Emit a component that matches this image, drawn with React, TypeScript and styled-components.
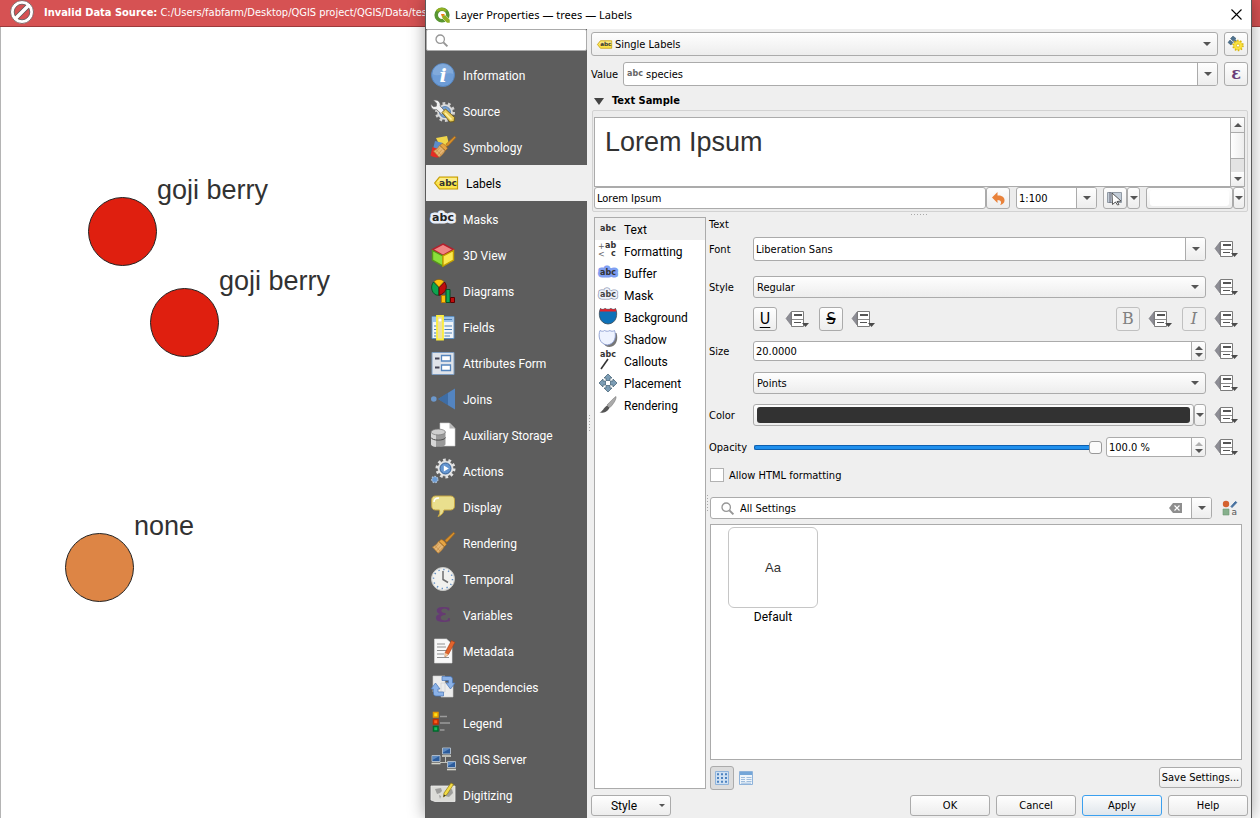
import React from "react";
import styled, { createGlobalStyle, css } from "styled-components";

const uiFont = `Roboto, "Open Sans", sans-serif`;
const titleFont = `"Noto Sans", "Open Sans", sans-serif`;
const formFont = `"DejaVu Sans Condensed", "DejaVu Sans", sans-serif`;
const mapFont = `"Liberation Sans", Arial, sans-serif`;
const line = "#ababab";
const face = "linear-gradient(#fefefe, #ededed)";

const GlobalStyle = createGlobalStyle`
  *, *::before, *::after { box-sizing: border-box; }
  body { margin: 0; background: #fff; color: #000; font: 11px/16px ${formFont}; }
  button, input, select { margin: 0; color: inherit; font: inherit; }
  svg { display: block; flex: none; overflow: visible; }
`;

/* ---------- desktop and map ---------- */

const Desktop = styled.div`
  display: grid;
  grid-template-columns: minmax(0, 1fr);
  min-height: 100vh;
  overflow: hidden;
  > * { grid-area: 1 / 1; }
`;

const MainWindow = styled.main`
  display: flex;
  flex-direction: column;
`;

const MessageBar = styled.div`
  display: flex;
  align-items: center;
  gap: 10px;
  height: 27px;
  padding: 0 10px 2px;
  overflow: hidden;
  white-space: nowrap;
  color: #fff;
  background: #d65253;
  border-bottom: 1px solid #9c3a3b;
`;

const Caption = styled.span`
  padding-top: 2px;
`;

const MapCanvas = styled.div`
  position: relative;
  flex: 1;
  background: #fff;
  border-left: 1px solid #b4b4b4;
`;

const Tree = styled.div<{ $x: number; $y: number; $fill: string }>`
  position: absolute;
  left: ${(p) => p.$x}px;
  top: ${(p) => p.$y}px;
  width: 69px;
  height: 69px;
  border: 1px solid #232323;
  border-radius: 50%;
  background: ${(p) => p.$fill};
`;

const TreeLabel = styled.span`
  position: absolute;
  left: 68px;
  bottom: 59px;
  font: 27px/32px ${mapFont};
  color: #323232;
  white-space: nowrap;
`;

/* ---------- dialog frame ---------- */

const Dialog = styled.section`
  position: relative;
  display: flex;
  flex-direction: column;
  margin: 0 8px 0 425px;
  background: #efefef;
  border: solid #5a5a5a;
  border-width: 0 1px;
  box-shadow: 0 0 16px rgba(0, 0, 0, 0.36);
`;

const TitleBar = styled.header`
  display: flex;
  align-items: center;
  gap: 5px;
  height: 29px;
  padding: 0 8px;
  background: #fff;
`;

const Title = styled.h1`
  flex: 1;
  margin: 0;
  font: 400 11px/16px ${titleFont};
`;

const PlainButton = styled.button`
  display: grid;
  place-items: center;
  padding: 0;
  border: 0;
  background: none;
`;

const DialogBody = styled.div`
  display: flex;
  flex: 1;
`;

const Sidebar = styled.nav`
  width: 161px;
  background: #5d5d5d;
  padding-bottom: 5px;
`;

const SearchBox = styled.label`
  display: flex;
  align-items: center;
  gap: 4px;
  height: 22px;
  margin: 0 0 6px;
  padding: 0 8px;
  background: #fff;
  border: 1px solid ${line};
  border-radius: 2px;
`;

const BareInput = styled.input`
  flex: 1;
  min-width: 0;
  padding: 2px 0 0;
  border: 0;
  outline: 0;
  background: none;
`;

const SideItem = styled.button<{ $active?: boolean }>`
  display: flex;
  align-items: center;
  gap: 8px;
  width: 100%;
  height: 36px;
  padding: 0 0 0 5px;
  border: 0;
  background: none;
  font: 12px/16px ${uiFont};
  color: #fff;
  ${(p) => p.$active && css`
    padding-left: 8px;
    color: #000;
    background: #efefef;
  `}
`;

const Splitter = styled.div<{ $horizontal?: boolean; $size?: number }>`
  display: grid;
  place-items: center;
  flex: 0 0 ${(p) => p.$size ?? 4}px;
  &::after {
    content: "";
    width: ${(p) => (p.$horizontal ? 17 : 1)}px;
    height: ${(p) => (p.$horizontal ? 1 : 17)}px;
    background: repeating-linear-gradient(${(p) => (p.$horizontal ? "90deg" : "180deg")}, #a8a8a8 0 1px, transparent 1px 3px);
  }
`;

const Content = styled.div`
  display: flex;
  flex: 1;
  flex-direction: column;
  min-width: 0;
  padding: 3px 3px 0 0;
`;

/* ---------- shared controls ---------- */

const frame = css`
  border: 1px solid ${line};
  border-radius: 3px;
`;

const ToolRow = styled.div`
  display: flex;
  align-items: center;
  gap: 6px;
  height: 24px;
  margin-bottom: 6px;
`;

const InlineLabel = styled.label`
  width: 26px;
  padding-top: 2px;
`;

const SelectFrame = styled.div<{ $h?: number }>`
  position: relative;
  display: flex;
  align-items: center;
  flex: 1;
  min-width: 0;
  height: ${(p) => p.$h ?? 22}px;
`;

const Select = styled.select<{ $indent?: boolean }>`
  appearance: none;
  width: 100%;
  height: 100%;
  padding: 2px 24px 0 ${(p) => (p.$indent ? 23 : 3)}px;
  ${frame}
  background: ${face};
`;

const Overlay = styled.span<{ $side: "left" | "right" }>`
  position: absolute;
  top: 0;
  bottom: 0;
  ${(p) => (p.$side === "left" ? "left: 6px;" : "right: 7px;")}
  display: grid;
  place-items: center;
  pointer-events: none;
`;

const Field = styled.div<{ $h?: number; $w?: number }>`
  display: flex;
  align-items: center;
  flex: ${(p) => (p.$w ? `0 0 ${p.$w}px` : "1 1 0")};
  min-width: 0;
  height: ${(p) => p.$h ?? 22}px;
  padding-left: 2px;
  overflow: hidden;
  ${frame}
  background: #fff;
`;

const FieldButton = styled.button<{ $w?: number }>`
  display: grid;
  place-items: center;
  align-content: center;
  gap: 3px;
  flex: none;
  width: ${(p) => p.$w ?? 20}px;
  height: 100%;
  padding: 0;
  border: 0;
  border-left: 1px solid ${line};
  background: ${face};
`;

const Button = styled.button<{ $w?: number; $h?: number; $primary?: boolean; $pressed?: boolean }>`
  display: flex;
  align-items: center;
  justify-content: center;
  flex: none;
  width: ${(p) => p.$w ?? 24}px;
  height: ${(p) => p.$h ?? 24}px;
  padding: 0;
  ${frame}
  background: ${(p) => (p.$pressed ? "#dcdcdc" : face)};
  ${(p) => p.$primary && css`
    border-color: #3ba0ef;
    background: linear-gradient(#fdfdfd, #dfe6ec);
  `}
`;

const Glyph = styled(Button)<{ $kind: "underline" | "strike" | "bold" | "italic" }>`
  font: 16px/20px ${formFont};
  ${(p) => p.$kind === "underline" && "text-decoration: underline; text-underline-offset: 3px; text-decoration-thickness: 1px;"}
  ${(p) => p.$kind === "strike" && "text-decoration: line-through; text-decoration-thickness: 2px;"}
  ${(p) => p.$kind === "bold" && `font-family: "DejaVu Serif", serif; color: #808080; border-color: #c0c0c0; background: #f0f0f0;`}
  ${(p) => p.$kind === "italic" && `font-family: "DejaVu Serif", serif; font-style: italic; color: #808080; border-color: #c0c0c0; background: #f0f0f0;`}
`;

/* ---------- text sample ---------- */

const GroupTitle = styled.h2`
  display: flex;
  align-items: center;
  gap: 8px;
  height: 18px;
  margin: 0 0 0 3px;
  font: 700 11px/16px ${formFont};
`;

const SampleGroup = styled.div`
  margin-left: 1px;
  padding: 6px 2px 2px 1px;
  border: 1px solid #d2d2d2;
  border-radius: 2px;
  background: #ececec;
`;

const Preview = styled.div`
  display: flex;
  height: 70px;
  background: #fff;
  border: 1px solid ${line};
`;

const PreviewText = styled.div`
  flex: 1;
  padding: 8px 10px;
  font: 27px/32px ${mapFont};
  color: #323232;
`;

const ScrollBar = styled.div`
  display: flex;
  flex-direction: column;
  width: 14px;
  border-left: 1px solid ${line};
  background: #e3e3e3;
`;

const ScrollEnd = styled(PlainButton)`
  height: 14px;
  background: ${face};
`;

const ScrollThumb = styled.div`
  height: 27px;
  margin-bottom: auto;
  border: solid ${line};
  border-width: 1px 0;
  background: linear-gradient(90deg, #fefefe, #ededed);
`;

const SampleRow = styled.div`
  display: flex;
  gap: 6px;
`;

const Joined = styled.div<{ $grow?: boolean }>`
  display: flex;
  flex: ${(p) => (p.$grow ? "1 1 0" : "none")};
  min-width: 0;
`;

const Swatch = styled.span<{ $color: string }>`
  flex: 1;
  align-self: stretch;
  margin: 2px 3px;
  border-radius: 3px;
  background: ${(p) => p.$color};
`;

const ColorButton = styled(Button)<{ $grow?: boolean }>`
  ${(p) => p.$grow && "flex: 1 1 0; min-width: 0;"}
`;

/* ---------- label settings ---------- */

const Lower = styled.div`
  display: flex;
  flex: 1;
`;

const PageList = styled.div`
  width: 112px;
  margin-left: 3px;
  border: 1px solid ${line};
  background: #fff;
`;

const PageItem = styled.button<{ $active?: boolean }>`
  display: flex;
  align-items: center;
  gap: 6px;
  width: 100%;
  height: 22px;
  padding: 0 0 0 3px;
  border: 0;
  background: ${(p) => (p.$active ? "#efefef" : "none")};
  font: 12px/16px ${uiFont};
`;

const Form = styled.form`
  display: flex;
  flex: 1;
  flex-direction: column;
  min-width: 0;
`;

const FormHeading = styled.h3`
  margin: 0;
  font: 400 11px/16px ${formFont};
`;

const FormRow = styled.div<{ $spaced?: boolean }>`
  display: flex;
  align-items: center;
  height: 32px;
  margin-bottom: ${(p) => (p.$spaced ? 6 : 0)}px;
  padding-right: 9px;
`;

const FormLabel = styled.label`
  flex: none;
  width: 44px;
  padding-top: 2px;
`;

const OverrideButton = styled(PlainButton)`
  flex: none;
  width: 24px;
  margin-left: 9px;
`;

const StyleTools = styled.div`
  display: flex;
  flex: 1;
`;

const OverrideGap = styled.span`
  width: 9px;
`;

const Spacer = styled.span`
  flex: 1;
`;

const Slider = styled.input`
  appearance: none;
  flex: 1;
  min-width: 0;
  height: 14px;
  margin: 0 4px 0 1px;
  background: none;
  &::-webkit-slider-runnable-track {
    height: 5px;
    border: 1px solid #0d5fae;
    border-right: 0;
    border-radius: 2px;
    background: #1f8fec;
  }
  &::-webkit-slider-thumb {
    appearance: none;
    width: 13px;
    height: 13px;
    margin-top: -5px;
    border: 1px solid #999;
    border-radius: 3px;
    background: #fbfbfb;
  }
`;

const CheckLabel = styled.label`
  display: flex;
  align-items: center;
  gap: 5px;
  height: 24px;
  margin-bottom: 10px;
  padding-left: 1px;
`;

const CheckBox = styled.input`
  appearance: none;
  width: 14px;
  height: 14px;
  border: 1px solid #b2b2b2;
  background: #fff;
`;

const FilterRow = styled.div`
  display: flex;
  gap: 9px;
  margin: 0 9px 5px 1px;
`;

const FilterIcon = styled.span`
  padding: 0 6px 0 8px;
`;

const ClearButton = styled(PlainButton)`
  padding-right: 9px;
`;

const PresetList = styled.div`
  flex: 1;
  margin: 0 6px 0 1px;
  padding: 2px 17px;
  border: 1px solid ${line};
  background: #fff;
`;

const Preset = styled(PlainButton)`
  width: 90px;
  gap: 1px;
  font: 12px/16px ${uiFont};
`;

const PresetThumb = styled.span`
  display: grid;
  place-items: center;
  width: 90px;
  height: 81px;
  border: 1px solid #c6c6c6;
  border-radius: 6px;
  font: 13px/16px ${mapFont};
  color: #323232;
`;

const ViewRow = styled.div`
  display: flex;
  align-items: center;
  gap: 5px;
  height: 29px;
  padding: 6px 6px 0 1px;
`;

const Footer = styled.footer`
  display: flex;
  gap: 6px;
  height: 29px;
  padding-top: 6px;
`;

const StyleMenu = styled(Button)`
  gap: 22px;
  padding: 0 4px 0 18px;
  font: 12px/16px ${uiFont};
`;

/* ---------- small drawings ---------- */

const Down = ({ w = 8, c = "#555" }: { w?: number; c?: string }) => (
  <svg width={w} height={w / 2} viewBox="0 0 8 4"><path d="M0 0h8L4 4z" fill={c} /></svg>
);
const Up = ({ c = "#555" }: { c?: string }) => (
  <svg width="8" height="4" viewBox="0 0 8 4"><path d="M0 4h8L4 0z" fill={c} /></svg>
);
const Magnifier = () => (
  <svg width="13" height="13" viewBox="0 0 13 13" fill="none" stroke="#969696">
    <circle cx="5.2" cy="5.2" r="4.2" strokeWidth="1.3" /><path d="M8.4 8.4l4 4" strokeWidth="2" />
  </svg>
);
const Override = ({ label }: { label: string }) => (
  <OverrideButton type="button" aria-label={`Data defined override: ${label}`}>
    <svg width="24" height="18" viewBox="0 0 24 18">
      <path d="M0 8.5L5 2v13z" fill="#8d8d95" stroke="#77777c" strokeWidth=".6" />
      <path d="M5.5 1.5h12v15h-12z" fill="#fff" stroke="#7b7b7b" />
      <path d="M6 9.5h11" stroke="#8c8c8c" /><path d="M8 5h8" stroke="#555" strokeWidth="2" /><path d="M8 12.5h7" stroke="#555" />
      <path d="M16 13h7l-3.5 4z" fill="#4a4a4a" />
    </svg>
  </OverrideButton>
);

const Abc = ({ size = 9, x = 12, y = 15, fill = "#333", halo }: { size?: number; x?: number; y?: number; fill?: string; halo?: string }) => (
  <text x={x} y={y} textAnchor="middle" fontFamily="DejaVu Sans, sans-serif" fontWeight="700" fontSize={size} fill={fill}
    stroke={halo} strokeWidth={halo ? 5 : 0} strokeLinejoin="round" paintOrder="stroke">abc</text>
);
const TagIcon = ({ w = 24, h = 24 }: { w?: number; h?: number }) => (
  <svg width={w} height={h} viewBox="0 0 24 24">
    <path d="M5.5 6h18v12h-18L.7 12z" fill="#fbe34a" stroke="#c39a05" strokeWidth="1.2" />
    <path d="M6 7h17v4H3z" fill="#fff" opacity=".35" /><Abc size={9} x={14} y={15} />
  </svg>
);
const Gear = ({ cx, cy, r, fill, stroke, teeth = 10 }: { cx: number; cy: number; r: number; fill: string; stroke: string; teeth?: number }) => (
  <g transform={`translate(${cx} ${cy})`}>
    <circle r={r} fill="none" stroke={stroke} strokeWidth={r * 0.5} strokeDasharray={`${(Math.PI * r) / teeth} ${(Math.PI * r) / teeth}`} />
    <circle r={r * 0.95} fill={fill} stroke={stroke} strokeWidth=".5" />
  </g>
);
const Broom = () => (
  <g>
    <path d="M22.6 1.2l1.2 1.4-8 8.6-2-1.8z" fill="#d9912c" stroke="#a86714" strokeWidth=".7" />
    <path d="M10 8.500c2 .2 5 3 5.400 5.200l-2 1.800-5.400-5z" fill="#e6a443" stroke="#a86714" strokeWidth=".6" />
    <path d="M7.500 10.500l5.600 5.200c-1.500 3-4 5.300-6 6.500L1.500 16c2.300-1 4.500-2.800 6-5.500z" fill="#e4b573" stroke="#b37a2e" strokeWidth=".7" />
    <path d="M8 12.500l-4.500 5M10 14.500L5.500 20M11.500 16.500l-4 5M4 14.500l5 5.500" stroke="#bd8136" strokeWidth=".5" />
  </g>
);
const Box = ({ children }: { children: React.ReactNode }) => <svg width="24" height="24" viewBox="0 0 24 24">{children}</svg>;
const Monitor = ({ x, y }: { x: number; y: number }) => (
  <g transform={`translate(${x} ${y})`}>
    <path d="M.5.5h8v6h-8z" fill="#2c5c9c" stroke="#b8c4d0" strokeWidth=".9" /><path d="M1 1h7L1 5z" fill="#7fa8d8" opacity=".6" /><path d="M0 8.500h9" stroke="#d5d5cb" strokeWidth="1.6" />
  </g>
);

const sideItems: { name: string; icon: React.ReactNode }[] = [
  { name: "Information", icon: <Box><circle cx="12" cy="12" r="11.500" fill="#6d9cd6" stroke="#5584bd" /><path d="M1.500 11a10.500 10.500 0 0 1 21 0C16 8 8 15 1.500 11z" fill="#fff" opacity=".14" /><text x="12" y="19" textAnchor="middle" fontFamily="DejaVu Serif, serif" fontStyle="italic" fontWeight="700" fontSize="19" fill="#fff">i</text></Box> },
  { name: "Source", icon: <Box><Gear cx={14} cy={13} r={8} fill="#ddd" stroke="#d2d2d2" /><circle cx="14" cy="13" r="5.500" fill="#76a0d2" stroke="#4c77aa" strokeWidth=".8" /><path d="M2.500 1.200l3 3-.2 3-3 .4L0 5.200c-.6 3.800 2.200 6.200 5.600 5.400l5 4.600 3.200-3.200-4.600-5C10 3.200 6.500 0 2.500 1.200z" fill="#f2f2f2" stroke="#666" strokeWidth=".8" /><path d="M11 13.500l3.500-3.500 9 8.500-.5 4-4 .500z" fill="#e8cb5b" stroke="#6f5a12" strokeWidth=".9" /><path d="M14 14l6.500 6.500" stroke="#fff3a5" strokeWidth="1.600" /></Box> },
  { name: "Symbology", icon: <Box><path d="M5 3l11-2 2 8-7 6z" fill="#f0d64a" /><path d="M4 6l8 2-3 8-7-2z" fill="#5c8dcb" /><path d="M1.500 12l8 3-2 7.500c-3 0-6-.500-8-2z" fill="#e32d24" /><g transform="translate(1 0)"><Broom /></g></Box> },
  { name: "Labels", icon: <TagIcon /> },
  { name: "Masks", icon: <Box><Abc size={11} x={12} y={14} fill="#222" halo="#e8eef8" /></Box> },
  { name: "3D View", icon: <Box><path d="M12 1l10.500 5.500L12 12.500 1.500 6.500z" fill="#f08585" stroke="#b3202d" strokeWidth="1.500" /><path d="M1.500 7.500L12 13v10L1.500 17z" fill="#8be03a" stroke="#57971c" strokeWidth="1.400" /><path d="M22.500 7.500L12 13v10l10.500-6z" fill="#fce94f" stroke="#c4a000" strokeWidth="1.400" /></Box> },
  { name: "Diagrams", icon: <Box><path d="M8 8.500L2.500 3C-.5 6.500 0 13.500 5 16l3 .3z" fill="#0da34f" stroke="#034f24" strokeWidth=".9" /><path d="M8 8.500L13.500 3C17 7 15.500 14.500 8 16.300z" fill="#c00d0d" stroke="#5a0000" strokeWidth=".9" /><path d="M8 8L13 2.500C10.500-.3 5.500-.3 3 2.500z" fill="#fcc00c" stroke="#8e5c00" strokeWidth=".6" /><path d="M10.500 16.500h4v7h-4z" fill="#fcc00c" stroke="#c07a00" /><path d="M15 10.500h4v13h-4z" fill="#0ea955" stroke="#034f24" /><path d="M19.500 18.500h4v5h-4z" fill="#c00d0d" stroke="#5a0000" /></Box> },
  { name: "Fields", icon: <Box><path d="M1 1.500h22v22H1z" fill="#f0f4f8" stroke="#5f8fbf" /><path d="M1.500 2h21v5h-21z" fill="#9dc3ea" /><path d="M13 4.500h8M3 11h18M3 14.500h18M3 18h18M3 21h16" stroke="#4d7fb5" strokeWidth="1.200" strokeDasharray="9 1.500" /><path d="M6 .8h6v23.700H6z" fill="#eadfa6" stroke="#fcee3c" strokeWidth="1.800" /><circle cx="9" cy="5" r="1.500" fill="#fff" /></Box> },
  { name: "Attributes Form", icon: <Box><path d="M1 1.500h22v22H1z" fill="#dfe3ea" stroke="#7d9cc0" /><path d="M10.500 4.500h9v5.500h-9zM10.500 14h9v5.500h-9z" fill="#fff" stroke="#5585bd" strokeWidth="1.300" /><path d="M4 7.500h4.500M4 16.500h4.500" stroke="#445" strokeWidth="2" /></Box> },
  { name: "Joins", icon: <Box><circle cx="2.800" cy="12" r="2.800" fill="#6c98cc" /><path d="M7 12L24 1.500v21z" fill="#5384c0" /><path d="M7 12l10-6.200v12.400z" fill="#305d92" opacity=".6" /></Box> },
  { name: "Auxiliary Storage", icon: <Box><path d="M9 0h9.500L24 5.500V23H9z" fill="#fff" stroke="#ccc" strokeWidth=".6" /><path d="M18.500 0v5.500H24z" fill="#b8b8b8" /><path d="M0 9v12c0 3.800 14.500 3.800 14.500 0V9z" fill="#999" /><path d="M0 9v12c0 2 3 2.800 5 2.900V9z" fill="#d6d6d6" /><ellipse cx="7.200" cy="9" rx="7.200" ry="2.900" fill="#cfcfcf" stroke="#777" strokeWidth=".7" /><path d="M0 14.500c1 3.500 13.500 3.500 14.500 0" fill="none" stroke="#4e4e4e" /></Box> },
  { name: "Actions", icon: <Box><Gear cx={14.5} cy={9.500} r={8} fill="#e8e8e8" stroke="#e2e2e2" /><circle cx="14.500" cy="9.500" r="5.500" fill="#6495d0" stroke="#345f94" /><path d="M12.800 6.500v6l5-3z" fill="#fff" /><Gear cx={3.800} cy={20.5} r={3} fill="#6b9cd5" stroke="#b6c8dc" teeth={7} /></Box> },
  { name: "Display", icon: <Box><path d="M4.500 1h15c2.500 0 4 1.500 4 4v6c0 2.500-1.500 4-4 4H13c-.5 3.500-3 5.500-6 6.500 1.500-2 2-4 1.500-6.500h-4C2 15 .7 13.500.7 11V5c0-2.500 1.300-4 3.800-4z" fill="#eadf8e" stroke="#c4a542" /><path d="M3 7c0-3 1.500-4 5-4" fill="none" stroke="#fff" strokeWidth="1.500" /></Box> },
  { name: "Rendering", icon: <Box><Broom /></Box> },
  { name: "Temporal", icon: <Box><circle cx="12" cy="12" r="11.500" fill="#f1f1ee" stroke="#c9cac8" /><circle cx="12" cy="12" r="9.500" fill="none" stroke="#5d8cc4" strokeWidth="1.500" strokeDasharray="1.300 3.674" /><path d="M12 4v8.500l5 3" fill="none" stroke="#6d6d6d" strokeWidth="1.500" /></Box> },
  { name: "Variables", icon: <Box><text x="12" y="19" textAnchor="middle" fontFamily="DejaVu Serif, serif" fontWeight="700" fontSize="27" fill="#653a72">ε</text></Box> },
  { name: "Metadata", icon: <Box><path d="M3.500 0h12l5.500 5v19H3.500z" fill="#f8f8f8" stroke="#ddd" strokeWidth=".6" /><path d="M6 5h8M6 8h9M6 11.500h10M6 15h7M6 18.500h12" stroke="#8f8f8f" strokeWidth="1.200" /><path d="M20.500 1.500L24 3.300l-6.500 12L14 18l.2-4.500z" fill="#e2642d" stroke="#a13c12" strokeWidth=".6" /><path d="M14 18l.2-4 3 1.600z" fill="#efd3a5" /></Box> },
  { name: "Dependencies", icon: <Box><path d="M2 1h12v16H2zM10 8h12v14H10z" fill="#ececec" stroke="#ccc" strokeWidth=".6" /><path d="M11 1.500h8c1.500 0 2.500 1 2.500 2.500V8H24l-4.500 6L15 8h2.500V5.500H11z" fill="#8bb2e8" stroke="#4774b5" strokeWidth=".7" /><path d="M12.500 21H5c-1.500 0-2.500-1-2.500-2.500V14H0l4.500-6L9 14H7v3h5.500z" fill="#8bb2e8" stroke="#4774b5" strokeWidth=".7" /></Box> },
  { name: "Legend", icon: <Box><path d="M2.500 1.500h4.500v4.500H2.500z" fill="#fce01a" stroke="#e59a00" strokeWidth="1.500" /><path d="M2.500 8.500h4.500V13H2.500z" fill="#ff5a1c" stroke="#c02d00" strokeWidth="1.500" /><path d="M2.500 15.500h4.500V20H2.500z" fill="#14bd5c" stroke="#016a2d" strokeWidth="1.500" /><path d="M9 5.500h7M9 12h10M9 19h4.500" stroke="#9b9b9b" strokeWidth="1.500" /></Box> },
  { name: "QGIS Server", icon: <Box><path d="M14.500 10v6M9 15.500h8" stroke="#c2c2bb" /><Monitor x={11} y={.5} /><Monitor x={.5} y={8} /><Monitor x={16} y={14} /></Box> },
  { name: "Digitizing", icon: <Box><path d="M1.500 3H24v15.500H4L0 17V3z" fill="#dcdcd8" stroke="#eee" strokeWidth=".8" /><path d="M4 6l6-1 1 3-2 2-3 1zM8 12l2 1-1 3zM14 8l7-2 1 4-4 4-4-1z" fill="#9e9e9c" /><path d="M20 0l2.500 1.500-6.500 10L12.500 14l.5-4z" fill="#f3db45" stroke="#8f7b10" strokeWidth=".7" /><path d="M12.500 14l.4-2.500 1.800 1z" fill="#333" /></Box> },
];

const Small = ({ children }: { children: React.ReactNode }) => <svg width="20" height="20" viewBox="0 0 20 20">{children}</svg>;

const pageItems: { name: string; icon: React.ReactNode }[] = [
  { name: "Text", icon: <Small><Abc size={8} x={10} y={12} /></Small> },
  { name: "Formatting", icon: <Small><text x="0" y="8" fontFamily="DejaVu Sans" fontSize="8" fill="#666">+</text><text x="0" y="16" fontFamily="DejaVu Sans" fontSize="8" fill="#666">&lt;</text><text x="7" y="7" fontFamily="DejaVu Sans" fontWeight="700" fontSize="8" fill="#333">ab</text><text x="13" y="15" fontFamily="DejaVu Sans" fontWeight="700" fontSize="8" fill="#333">c</text></Small> },
  { name: "Buffer", icon: <Small><Abc size={8} x={10} y={12} halo="#7f9ff2" /></Small> },
  { name: "Mask", icon: <Small><Abc size={8} x={10} y={12} halo="#8f9bb5" /><text x="10" y="12" textAnchor="middle" fontFamily="DejaVu Sans" fontWeight="700" fontSize="8" fill="#444" stroke="#eef2fa" strokeWidth="3.500" strokeLinejoin="round" paintOrder="stroke">abc</text></Small> },
  { name: "Background", icon: <Small><path d="M2.500 1.500c1.500 1.500 3.500 1 4.500 0 2 1.200 4 1.200 6 0 1 1 3 1.500 4.500 0 2.500 5 1.500 15-7.500 15.500C1 16.500 0 6.500 2.500 1.500z" fill="#0e71b8" stroke="#3a4a55" strokeWidth=".8" /><path d="M2.500 1.500c1.500 1.500 3.500 1 4.500 0 2 1.200 4 1.200 6 0 1 1 3 1.500 4.500 0l.8 3H1.600z" fill="#e3242b" /></Small> },
  { name: "Shadow", icon: <Small><path d="M4 4c4 0 10 0 14.500 0 2 6 0 13.500-7 14C5 18 3 10 4 4z" fill="#777" /><path d="M2 1.500c1.500 1 3.500 1 4.500 0 2 1 3.500 1 5.500 0 1 1 3 1 4.500 0 2 5 1 13.500-7.300 14.500C1 15 0 6.500 2 1.500z" fill="#eef3ff" stroke="#8b9dd0" strokeWidth=".9" /></Small> },
  { name: "Callouts", icon: <Small><Abc size={8} x={10} y={6} /><path d="M10 8L3 18" stroke="#333" strokeWidth="1.600" /></Small> },
  { name: "Placement", icon: <Small><path d="M10 1l4 4h-2v2.500H8V5H6zM10 19l4-4h-2v-2.500H8V15H6zM1 10l4-4v2h2.500v4H5v2zM19 10l-4-4v2h-2.500v4H15v2z" fill="#7c9db5" stroke="#4d6a7c" strokeWidth=".8" /></Small> },
  { name: "Rendering", icon: <Small><path d="M18 1.500c.5 3-3 8-6 11l-3-2.500C12 7 15 3.500 18 1.500z" fill="#aaa" stroke="#777" strokeWidth=".6" /><path d="M9 10.500l2.600 2.200C9 17.500 5 18 1.500 17.500c3-.8 4-4.500 7.500-7z" fill="#555" /></Small> },
];

const Combo = ({ id, label, value, h, w, icon }: { id?: string; label?: string; value: string; h?: number; w?: number; icon?: React.ReactNode }) => (
  <Field $h={h} $w={w}>
    {icon}
    <BareInput id={id} aria-label={label} defaultValue={value} />
    <FieldButton type="button" aria-label={`Show choices for ${label ?? value}`}><Down /></FieldButton>
  </Field>
);

const Spin = ({ id, label, value, w, atMax }: { id?: string; label?: string; value: string; w?: number; atMax?: boolean }) => (
  <Field $h={20} $w={w}>
    <BareInput id={id} aria-label={label} defaultValue={value} />
    <FieldButton type="button" $w={14} aria-label={`Step ${label ?? id}`}><Up c={atMax ? "#b0b0b0" : undefined} /><Down /></FieldButton>
  </Field>
);

const trees = [
  { x: 87, y: 170, fill: "#df1f0f", label: "goji berry" },
  { x: 149, y: 261, fill: "#df1f0f", label: "goji berry" },
  { x: 64, y: 506, fill: "#dd8545", label: "none" },
];

export default function App() {
  return (
    <Desktop>
      <GlobalStyle />
      <MainWindow>
        <MessageBar role="alert">
          <svg width="24" height="24" viewBox="0 0 24 24">
            <circle cx="12" cy="12" r="11.500" fill="#fff" stroke="#6b5555" strokeWidth=".8" />
            <circle cx="12" cy="12" r="7.800" fill="#d65253" stroke="#555" strokeWidth=".8" />
            <path d="M6.500 17.500l11-11" stroke="#555" strokeWidth="5" /><path d="M5.500 18.500l13-13" stroke="#fff" strokeWidth="3.600" />
          </svg>
          <Caption><strong>Invalid Data Source:</strong> C:/Users/fabfarm/Desktop/QGIS project/QGIS/Data/tes</Caption>
        </MessageBar>
        <MapCanvas>
          {trees.map((t) => (
            <Tree key={t.y} $x={t.x} $y={t.y} $fill={t.fill}><TreeLabel>{t.label}</TreeLabel></Tree>
          ))}
        </MapCanvas>
      </MainWindow>

      <Dialog role="dialog" aria-labelledby="dialog-title">
        <TitleBar>
          <svg width="16" height="16" viewBox="0 0 16 16">
            <circle cx="8" cy="8" r="5.800" fill="none" stroke="#589632" strokeWidth="3.600" />
            <path d="M3 4a6.300 6.300 0 0 1 9 0" fill="none" stroke="#93b023" strokeWidth="2.500" />
            <path d="M8 8h3.200l4.800 4.800V16h-3L8 11z" fill="#93b023" stroke="#fff" strokeWidth=".5" /><path d="M7 7h4L8 10z" fill="#ee7913" />
          </svg>
          <Title id="dialog-title">Layer Properties — trees — Labels</Title>
          <PlainButton aria-label="Close">
            <svg width="13" height="13" viewBox="0 0 13 13"><path d="M1.500 1.500l10 10m0-10l-10 10" stroke="#000" strokeWidth="1.100" /></svg>
          </PlainButton>
        </TitleBar>

        <DialogBody>
          <Sidebar>
            <SearchBox><Magnifier /><BareInput aria-label="Search properties" /></SearchBox>
            {sideItems.map((s) => (
              <SideItem key={s.name} $active={s.name === "Labels"}>{s.icon}<Caption>{s.name}</Caption></SideItem>
            ))}
          </Sidebar>
          <Splitter />

          <Content>
            <ToolRow>
              <SelectFrame $h={24}>
                <Select $indent aria-label="Labeling mode"><option>Single Labels</option></Select>
                <Overlay $side="left"><TagIcon w={15} h={15} /></Overlay>
                <Overlay $side="right"><Down /></Overlay>
              </SelectFrame>
              <Button aria-label="Placement engine settings">
                <svg width="16" height="16" viewBox="0 0 16 16">
                  <path d="M5 0l3 2.500L5 5 2.500 2.500zM2 4l3 2.500-2 2.500L0 6.500z" fill="#4f728e" stroke="#2f4f68" strokeWidth=".5" />
                  <path d="M7 3l2 2-2 2-2-1z" fill="#4f728e" />
                  <Gear cx={10} cy={9.500} r={4.600} fill="#fbe23c" stroke="#d9b80e" /><circle cx="10" cy="9.500" r="1.500" fill="#fff" stroke="#c9a500" strokeWidth=".6" />
                </svg>
              </Button>
            </ToolRow>

            <ToolRow>
              <InlineLabel htmlFor="value">Value</InlineLabel>
              <Combo id="value" value="species" h={24} icon={
                <svg width="20" height="14" viewBox="0 0 20 14"><Abc size={8} x={9} y={9} fill="#666" /></svg>
              } />
              <Button aria-label="Expression builder">
                <svg width="16" height="16" viewBox="0 0 16 16"><text x="8" y="13" textAnchor="middle" fontFamily="DejaVu Serif, serif" fontWeight="700" fontSize="16" fill="#6b3d78">ε</text></svg>
              </Button>
            </ToolRow>

            <GroupTitle><svg width="10" height="7" viewBox="0 0 10 7"><path d="M0 0h10L5 7z" fill="#444" /></svg>Text Sample</GroupTitle>
            <SampleGroup>
              <Preview>
                <PreviewText>Lorem Ipsum</PreviewText>
                <ScrollBar>
                  <ScrollEnd aria-label="Scroll up"><Up /></ScrollEnd>
                  <ScrollThumb />
                  <ScrollEnd aria-label="Scroll down"><Down /></ScrollEnd>
                </ScrollBar>
              </Preview>
              <SampleRow>
                <Joined $grow>
                  <Field><BareInput aria-label="Sample text" defaultValue="Lorem Ipsum" /></Field>
                  <Button $h={22} aria-label="Reset sample text">
                    <svg width="13" height="13" viewBox="0 0 13 13"><path d="M0 5.500L5.500 0v3.500C10 3 13 5.500 12.500 9c-.3 2-2 3.500-4.500 4C9.800 11 9.500 8 5.500 8v3z" fill="#e9823a" /></svg>
                  </Button>
                </Joined>
                <Combo label="Preview scale" value="1:100" w={81} />
                <Joined>
                  <Button $h={22} aria-label="Use map canvas scale">
                    <svg width="16" height="14" viewBox="0 0 16 14"><path d="M.5 1.500h14v10H.5z" fill="#c3cdd8" stroke="#929ba5" /><path d="M3 1v11" stroke="#667" /><path d="M5 2l9 8-4 .5 2 3-1.500.5-2-3-3 2.500z" fill="#fff" stroke="#444" strokeWidth=".9" /></svg>
                  </Button>
                  <Button $w={13} $h={22} aria-label="Scale presets"><Down /></Button>
                </Joined>
                <Joined>
                  <ColorButton $w={87} $h={22} aria-label="Preview background color"><Swatch $color="#fff" /></ColorButton>
                  <Button $w={12} $h={22} aria-label="Background color menu"><Down /></Button>
                </Joined>
              </SampleRow>
            </SampleGroup>
            <Splitter $horizontal $size={5} />

            <Lower>
              <PageList>
                {pageItems.map((p) => (
                  <PageItem key={p.name} $active={p.name === "Text"}>{p.icon}<Caption>{p.name}</Caption></PageItem>
                ))}
              </PageList>
              <Splitter $size={3} />

              <Form onSubmit={(e) => e.preventDefault()}>
                <FormHeading>Text</FormHeading>
                <FormRow $spaced>
                  <FormLabel htmlFor="font">Font</FormLabel>
                  <Combo id="font" value="Liberation Sans" h={24} />
                  <Override label="Font" />
                </FormRow>
                <FormRow>
                  <FormLabel htmlFor="style">Style</FormLabel>
                  <SelectFrame><Select id="style"><option>Regular</option></Select><Overlay $side="right"><Down /></Overlay></SelectFrame>
                  <Override label="Style" />
                </FormRow>
                <FormRow>
                  <FormLabel as="span" />
                  <StyleTools>
                    <Glyph type="button" $kind="underline">U</Glyph>
                    <Override label="Underline" />
                    <OverrideGap />
                    <Glyph type="button" $kind="strike">S</Glyph>
                    <Override label="Strikeout" />
                    <Spacer />
                    <Glyph type="button" $kind="bold" disabled>B</Glyph>
                    <Override label="Bold" />
                    <OverrideGap />
                    <Glyph type="button" $kind="italic" disabled>I</Glyph>
                  </StyleTools>
                  <Override label="Italic" />
                </FormRow>
                <FormRow>
                  <FormLabel htmlFor="size">Size</FormLabel>
                  <Spin id="size" value="20.0000" />
                  <Override label="Size" />
                </FormRow>
                <FormRow>
                  <FormLabel as="span" />
                  <SelectFrame><Select aria-label="Size unit"><option>Points</option></Select><Overlay $side="right"><Down /></Overlay></SelectFrame>
                  <Override label="Size unit" />
                </FormRow>
                <FormRow>
                  <FormLabel htmlFor="color">Color</FormLabel>
                  <ColorButton id="color" type="button" $grow $h={22}><Swatch $color="#323232" /></ColorButton>
                  <Button type="button" $w={12} $h={22} aria-label="Color menu"><Down /></Button>
                  <Override label="Color" />
                </FormRow>
                <FormRow>
                  <FormLabel htmlFor="opacity">Opacity</FormLabel>
                  <Slider id="opacity" type="range" min={0} max={100} defaultValue={100} />
                  <Spin label="Opacity value" value="100.0 %" w={100} atMax />
                  <Override label="Opacity" />
                </FormRow>
                <CheckLabel><CheckBox type="checkbox" /><Caption>Allow HTML formatting</Caption></CheckLabel>

                <FilterRow>
                  <Field>
                    <FilterIcon><Magnifier /></FilterIcon>
                    <BareInput aria-label="Filter presets" defaultValue="All Settings" />
                    <ClearButton type="button" aria-label="Clear filter">
                      <svg width="13" height="10" viewBox="0 0 13 10"><path d="M0 5l4-5h9v10H4z" fill="#8e8e8e" /><path d="M5.500 2.500l5 5m0-5l-5 5" stroke="#fff" strokeWidth="1.200" /></svg>
                    </ClearButton>
                    <FieldButton type="button" aria-label="Show preset groups"><Down /></FieldButton>
                  </Field>
                  <PlainButton type="button" aria-label="Style manager">
                    <svg width="18" height="16" viewBox="0 0 18 16"><circle cx="5" cy="4" r="3.200" fill="#d4622f" /><path d="M2 9h6v6H2z" fill="#86b08c" stroke="#6c9873" strokeWidth=".6" /><path d="M10 6.500l4.500-5 1.300 1L11 7.500z" fill="#456f9e" stroke="#456f9e" /><text x="10.500" y="15" fontFamily="DejaVu Sans" fontSize="9" fill="#555">a</text></svg>
                  </PlainButton>
                </FilterRow>
                <PresetList>
                  <Preset type="button"><PresetThumb>Aa</PresetThumb>Default</Preset>
                </PresetList>
                <ViewRow>
                  <Button type="button" $pressed aria-label="Icon view">
                    <svg width="14" height="14" viewBox="0 0 14 14"><path d="M.5.500h13v13H.5z" fill="#cfe0f2" stroke="#8fb3da" /><path d="M2 3.200h10M2 7h10M2 10.800h10" stroke="#4d83c0" strokeWidth="2" strokeDasharray="2 2" /></svg>
                  </Button>
                  <PlainButton type="button" aria-label="List view">
                    <svg width="14" height="14" viewBox="0 0 14 14"><path d="M.5.500h13v13H.5z" fill="#eef4fa" stroke="#8fb3da" /><path d="M1 1h12v3H1z" fill="#74a6d8" /><path d="M2 6.500h4M2 8.500h4M2 10.500h4M7.500 6.500h5M7.500 8.500h5M7.500 10.500h5M2 12.200h10" stroke="#9fbddd" /></svg>
                  </PlainButton>
                  <Spacer />
                  <Button type="button" $w={83} $h={21}>Save Settings...</Button>
                </ViewRow>
              </Form>
            </Lower>

            <Footer>
              <StyleMenu $w={80} $h={21}>Style<Down w={6} /></StyleMenu>
              <Spacer />
              <Button $w={80} $h={21}>OK</Button>
              <Button $w={80} $h={21}>Cancel</Button>
              <Button $w={80} $h={21} $primary>Apply</Button>
              <Button $w={80} $h={21}>Help</Button>
            </Footer>
          </Content>
        </DialogBody>
      </Dialog>
    </Desktop>
  );
}
